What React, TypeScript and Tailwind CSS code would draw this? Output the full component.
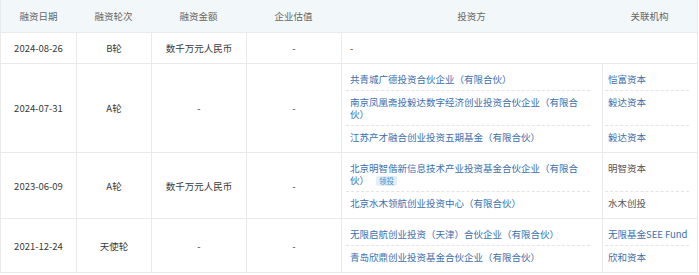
import React from "react";

type Investor = { name: string; org?: string; orgLink?: boolean; lead?: boolean };
type Round = { date: string; round: string; amount: string; valuation: string; investors: Investor[] };

const rounds: Round[] = [
  { date: "2024-08-26", round: "B轮", amount: "数千万元人民币", valuation: "-", investors: [] },
  {
    date: "2024-07-31",
    round: "A轮",
    amount: "-",
    valuation: "-",
    investors: [
      { name: "共青城广德投资合伙企业（有限合伙）", org: "恺富资本", orgLink: true },
      { name: "南京凤凰斋投毅达数字经济创业投资合伙企业（有限合伙）", org: "毅达资本", orgLink: true },
      { name: "江苏产才融合创业投资五期基金（有限合伙）", org: "毅达资本", orgLink: true },
    ],
  },
  {
    date: "2023-06-09",
    round: "A轮",
    amount: "数千万元人民币",
    valuation: "-",
    investors: [
      { name: "北京明智偕新信息技术产业投资基金合伙企业（有限合伙）", org: "明智资本", lead: true },
      { name: "北京水木领航创业投资中心（有限合伙）", org: "水木创投" },
    ],
  },
  {
    date: "2021-12-24",
    round: "天使轮",
    amount: "-",
    valuation: "-",
    investors: [
      { name: "无限启航创业投资（天津）合伙企业（有限合伙）", org: "无限基金SEE Fund", orgLink: true },
      { name: "青岛欣鼎创业投资基金合伙企业（有限合伙）", org: "欣和资本", orgLink: true },
    ],
  },
];

const headers = ["融资日期", "融资轮次", "融资金额", "企业估值", "投资方", "关联机构"];

export default function App() {
  return (
    <div
      className="w-[699px] h-[275px] bg-white text-[9.5px] leading-[12px] text-[#3a3a3a]"
      style={{ fontFamily: '"Noto Sans CJK SC", "Noto Sans", sans-serif' }}
    >
      <table className="w-[698px] table-fixed border-separate border-spacing-0">
        <colgroup>
          <col className="w-[76px]" />
          <col className="w-[75px]" />
          <col className="w-[95px]" />
          <col className="w-[95px]" />
          <col className="w-[261px]" />
          <col className="w-[96px]" />
        </colgroup>
        <thead>
          <tr className="bg-[#f2f7fa]">
            {headers.map((h) => (
              <th
                key={h}
                className="h-[33px] border-b border-[#e8ecef] text-center font-normal text-[#666] first:border-l last:border-r"
              >
                {h}
              </th>
            ))}
          </tr>
        </thead>
        <tbody>
          {rounds.map((r) => {
            const baseCell =
              "border-b border-l border-[#e9e9e9] text-center align-middle";
            if (r.investors.length === 0) {
              return (
                <tr key={r.date}>
                  <td className={baseCell}>{r.date}</td>
                  <td className={baseCell}>{r.round}</td>
                  <td className={baseCell}>{r.amount}</td>
                  <td className={baseCell}>{r.valuation}</td>
                  <td colSpan={2} className="border-b border-l border-r border-[#e9e9e9] pl-[8px] py-[9px]">
                    -
                  </td>
                </tr>
              );
            }
            const n = r.investors.length;
            return r.investors.map((inv, i) => {
              const first = i === 0;
              const last = i === n - 1;
              const edge = last ? "border-b border-[#e9e9e9]" : "";
              const pad = `${first ? "pt-[9px]" : "pt-[5px]"} ${last ? "pb-[9px]" : "pb-[5px]"}`;
              const dashed = first ? "" : "border-t border-dashed border-[#e4e4e4]";
              return (
                <tr key={r.date + i}>
                  {first && (
                    <>
                      <td rowSpan={n} className={baseCell}>{r.date}</td>
                      <td rowSpan={n} className={baseCell}>{r.round}</td>
                      <td rowSpan={n} className={baseCell}>{r.amount}</td>
                      <td rowSpan={n} className={baseCell}>{r.valuation}</td>
                    </>
                  )}
                  <td className={`border-l border-[#e9e9e9] align-top ${edge}`}>
                    <div className={`ml-[4px] mr-[12px] ${dashed}`}>
                      <div className={`pl-[4px] pr-[2px] ${pad} text-[#3d6fae]`}>
                        {inv.name}
                        {inv.lead && (
                          <span className="ml-[7px] inline-block align-middle rounded-[2px] bg-[#e2eefa] px-[3px] text-[7.5px] leading-[10px] text-[#4f88c6]">
                            领投
                          </span>
                        )}
                      </div>
                    </div>
                  </td>
                  <td className={`border-l border-r border-[#e9e9e9] align-top ${edge}`}>
                    <div className={`ml-[2px] mr-[8px] ${dashed}`}>
                      <div className={`pl-[3px] ${pad} ${inv.orgLink ? "text-[#3d6fae]" : "text-[#555]"}`}>
                        {inv.org}
                      </div>
                    </div>
                  </td>
                </tr>
              );
            });
          })}
        </tbody>
      </table>
    </div>
  );
}
